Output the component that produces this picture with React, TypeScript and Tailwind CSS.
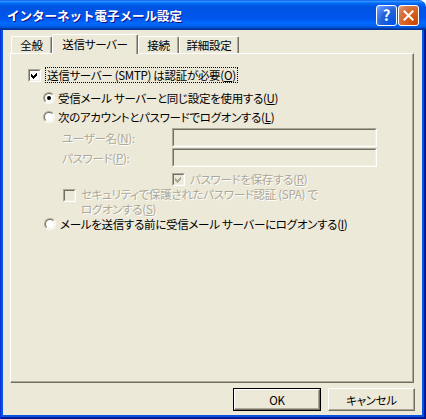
import React from "react";

const disabled = "text-[#ACA899] [text-shadow:1px_1px_0_#ffffff]";

function CheckBox({ checked, off }: { checked?: boolean; off?: boolean }) {
  return (
    <span className="flex h-[13px] w-[13px] shrink-0 border border-t-[#ACA899] border-l-[#ACA899] border-r-white border-b-white">
      <span
        className={`flex flex-1 items-center justify-center border border-t-[#716F64] border-l-[#716F64] border-r-[#F1EFE2] border-b-[#F1EFE2] ${
          off ? "bg-[#ECE9D8]" : "bg-white"
        }`}
      >
        {checked && (
          <svg width="7" height="7" viewBox="0 0 7 7" shapeRendering="crispEdges">
            <path d="M0 2 L2 4 L6 0 L6 3 L2 7 L0 5 Z" fill={off ? "#ACA899" : "#000"} />
          </svg>
        )}
      </span>
    </span>
  );
}

function Radio({ on }: { on?: boolean }) {
  return (
    <span className="flex h-[12px] w-[12px] shrink-0 rounded-full border border-t-[#ACA899] border-l-[#ACA899] border-r-white border-b-white">
      <span className="flex flex-1 items-center justify-center rounded-full border border-t-[#716F64] border-l-[#716F64] border-r-[#F1EFE2] border-b-[#F1EFE2] bg-white">
        {on && <span className="h-[4px] w-[4px] rounded-full bg-black" />}
      </span>
    </span>
  );
}

function Field() {
  return (
    <span className="flex h-[19px] w-[205px] border border-t-[#ACA899] border-l-[#ACA899] border-r-white border-b-white">
      <span className="flex-1 border border-t-[#716F64] border-l-[#716F64] border-r-[#F1EFE2] border-b-[#F1EFE2] bg-[#ECE9D8]" />
    </span>
  );
}

function Tab({ label, w, active }: { label: string; w: string; active?: boolean }) {
  return (
    <div
      className={`flex items-center justify-center rounded-t-[2px] border-l border-t border-r border-l-white border-t-white border-r-[#716F64] bg-[#ECE9D8] shadow-[inset_-1px_0_0_#ACA899] ${w} ${
        active ? "relative z-10 -mb-[1px] h-[20px] pb-[1px]" : "h-[17px]"
      }`}
    >
      {label}
    </div>
  );
}

function Button({ label, primary }: { label: string; primary?: boolean }) {
  return (
    <button
      className={`flex h-[23px] items-center justify-center ${
        primary ? "w-[88px] border border-black" : "w-[87px]"
      }`}
    >
      <span className="flex h-full w-full items-center justify-center border border-t-white border-l-white border-r-[#716F64] border-b-[#716F64] bg-[#ECE9D8] shadow-[inset_-1px_-1px_0_#ACA899]">
        {label}
      </span>
    </button>
  );
}

export default function App() {
  return (
    <div className="flex h-[419px] w-[426px] flex-col overflow-hidden rounded-tr-[7px] text-[11.5px] leading-[14px] tracking-[-0.3px] text-black [font-family:'Noto_Sans_CJK_JP','Noto_Sans',sans-serif] [font-feature-settings:'palt']">
      {/* title bar */}
      <div className="flex h-[30px] shrink-0 items-center pl-[7px] pr-[7px] bg-[linear-gradient(180deg,#0058ee_0%,#3593ff_4%,#288eff_6%,#127dff_8%,#036ffc_10%,#0262ee_14%,#0057e5_20%,#0054e3_24%,#0055eb_56%,#005bf5_66%,#026afe_76%,#0062ef_86%,#0052d6_92%,#0040ab_94%,#003092_100%)]">
        <span className="flex-1 pt-[1px] text-[12.5px] font-bold tracking-normal text-white [font-feature-settings:normal] [text-shadow:1px_1px_0_#0f1089]">
          インターネット電子メール設定
        </span>
        <div className="flex gap-[1px]">
          <span className="flex h-[21px] w-[21px] items-center justify-center rounded-[3px] border border-white bg-[radial-gradient(circle_at_90%_90%,#0054e9_0%,#2263d5_55%,#4477f0_70%,#5a8ffd_85%,#89b5ff_100%)] text-[15px] font-bold text-white">
            ?
          </span>
          <span className="flex h-[21px] w-[21px] items-center justify-center rounded-[3px] border border-white bg-[radial-gradient(circle_at_90%_90%,#cc4600_0%,#dc6527_55%,#cd7546_70%,#e08457_85%,#f1ae8c_100%)]">
            <svg width="11" height="11" viewBox="0 0 11 11">
              <path d="M1.5 1.5 L9.5 9.5 M9.5 1.5 L1.5 9.5" stroke="#fff" strokeWidth="2" strokeLinecap="square" />
            </svg>
          </span>
        </div>
      </div>

      {/* frame */}
      <div className="flex flex-1 flex-col bg-[#0855DD] pb-[4px] pl-[3px] pr-[4px] shadow-[inset_1px_0_0_#0831d9,inset_-1px_-1px_0_#00138c,inset_-2px_-2px_0_#001ea0]">
        <div className="flex flex-1 flex-col bg-[#ECE9D8]">
          {/* tabs */}
          <div className="mt-[4px] flex h-[19px] items-end pl-[8px]">
            <Tab label="全般" w="w-[41px]" />
            <Tab label="送信サーバー" w="w-[86px]" active />
            <Tab label="接続" w="w-[41px]" />
            <Tab label="詳細設定" w="w-[60px]" />
          </div>

          {/* panel */}
          <div className="ml-[7px] flex h-[330px] w-[404px] flex-col border border-t-white border-l-white border-r-[#716F64] border-b-[#716F64] shadow-[inset_-1px_-1px_0_#ACA899]">
            <div className="mt-[13px] flex h-[16px] items-center pl-[17px]">
              <CheckBox checked />
              <span className="ml-[4px] border border-dotted border-black px-[1px]">
                送信サーバー (SMTP) は認証が必要(<u>O</u>)
              </span>
            </div>

            <div className="mt-[7px] flex h-[16px] items-center pl-[32px]">
              <Radio on />
              <span className="ml-[3px]">
                受信メール サーバーと同じ設定を使用する(<u>U</u>)
              </span>
            </div>

            <div className="mt-[3px] flex h-[16px] items-center pl-[32px]">
              <Radio />
              <span className="ml-[3px]">
                次のアカウントとパスワードでログオンする(<u>L</u>)
              </span>
            </div>

            <div className="mt-[3px] flex items-center pl-[51px]">
              <span className={`w-[110px] ${disabled}`}>
                ユーザー名(<u>N</u>):
              </span>
              <Field />
            </div>
            <div className="mt-[1px] flex items-center pl-[51px]">
              <span className={`w-[110px] ${disabled}`}>
                パスワード(<u>P</u>):
              </span>
              <Field />
            </div>

            <div className="mt-[4px] flex h-[16px] items-center pl-[161px]">
              <CheckBox checked off />
              <span className={`ml-[5px] ${disabled}`}>
                パスワードを保存する(<u>R</u>)
              </span>
            </div>

            <div className="flex pl-[52px]">
              <span className="mt-[2px]">
                <CheckBox off />
              </span>
              <span className={`ml-[5px] leading-[15px] ${disabled}`}>
                セキュリティで保護されたパスワード認証 (SPA) で
                <br />
                ログオンする(<u>S</u>)
              </span>
            </div>

            <div className="-mt-[1px] flex h-[16px] items-center pl-[33px]">
              <Radio />
              <span className="ml-[4px]">
                メールを送信する前に受信メール サーバーにログオンする(<u>I</u>)
              </span>
            </div>
          </div>

          {/* buttons */}
          <div className="mt-[5px] flex justify-end gap-[7px] pr-[7px]">
            <Button label="OK" primary />
            <Button label="キャンセル" />
          </div>
        </div>
      </div>
    </div>
  );
}
